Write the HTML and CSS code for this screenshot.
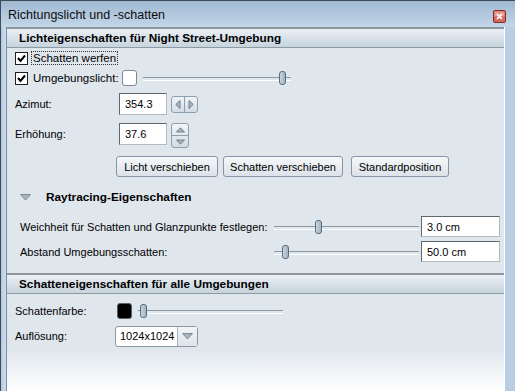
FILE: index.html
```html
<!DOCTYPE html>
<html lang="de">
<head>
    <meta charset="UTF-8">
    <title>Richtungslicht und -schatten</title>
    <link rel="stylesheet" href="styles.css">
</head>
<body>
    <div class="window">
        <div class="titlebar">
            <span class="title">Richtungslicht und -schatten</span>
            <span class="close">
                <svg width="13" height="13" viewBox="0 0 13 13">
                    <rect x="0.5" y="0.5" width="12" height="12" rx="1.5" fill="#d46a5e" stroke="#8a2a22"/>
                    <rect x="1.5" y="1.5" width="10" height="5" fill="#e79a90"/>
                    <path d="M4 4 L9 9 M9 4 L4 9" stroke="#fff" stroke-width="1.6"/>
                </svg>
            </span>
        </div>
        <div class="frame">
            <div class="panel">
                <div class="section-head">Lichteigenschaften für Night Street-Umgebung</div>

                <div class="row row-check">
                    <span class="checkbox"><svg width="11" height="11" viewBox="0 0 11 11"><path d="M2 5 L4.5 8 L9 2.5" fill="none" stroke="#000" stroke-width="2"/></svg></span>
                    <span class="focus">Schatten werfen</span>
                </div>
                <div class="row row-check">
                    <span class="checkbox"><svg width="11" height="11" viewBox="0 0 11 11"><path d="M2 5 L4.5 8 L9 2.5" fill="none" stroke="#000" stroke-width="2"/></svg></span>
                    <span class="check-label">Umgebungslicht:</span>
                    <span class="swatch swatch-white"></span>
                    <span class="slider slider-ambient"><span class="thumb" style="left: 136px"></span></span>
                </div>

                <div class="row row-field row-azimut">
                    <span class="label">Azimut:</span>
                    <span class="input input-num">354.3</span>
                    <span class="spin spin-h">
                        <span class="spin-part"><svg width="6" height="9" viewBox="0 0 6 9"><path d="M5 0.5 L0.8 4.5 L5 8.5 Z" fill="#a9b6c2" stroke="#6e7f8e"/></svg></span>
                        <span class="spin-part"><svg width="6" height="9" viewBox="0 0 6 9"><path d="M1 0.5 L5.2 4.5 L1 8.5 Z" fill="#a9b6c2" stroke="#6e7f8e"/></svg></span>
                    </span>
                </div>
                <div class="row row-field row-hoehe">
                    <span class="label">Erhöhung:</span>
                    <span class="input input-num">37.6</span>
                    <span class="spin spin-v">
                        <span class="spin-part"><svg width="9" height="6" viewBox="0 0 9 6"><path d="M0.5 5 L4.5 0.8 L8.5 5 Z" fill="#a9b6c2" stroke="#6e7f8e"/></svg></span>
                        <span class="spin-part"><svg width="9" height="6" viewBox="0 0 9 6"><path d="M0.5 1 L4.5 5.2 L8.5 1 Z" fill="#a9b6c2" stroke="#6e7f8e"/></svg></span>
                    </span>
                </div>

                <div class="buttons">
                    <span class="btn btn-licht">Licht verschieben</span>
                    <span class="btn btn-schatten">Schatten verschieben</span>
                    <span class="btn btn-standard">Standardposition</span>
                </div>

                <div class="subhead">
                    <svg class="tri" width="11" height="7" viewBox="0 0 11 7"><path d="M0.5 0.5 L10.5 0.5 L5.5 6 Z" fill="#a7b4bf" stroke="#7d8c99"/></svg>
                    <span>Raytracing-Eigenschaften</span>
                </div>

                <div class="row row-ray row-weich">
                    <span class="ray-label">Weichheit für Schatten und Glanzpunkte festlegen:</span>
                    <span class="slider slider-ray"><span class="thumb" style="left: 41px"></span></span>
                    <span class="input input-cm">3.0 cm</span>
                </div>
                <div class="row row-ray row-abstand">
                    <span class="ray-label">Abstand Umgebungsschatten:</span>
                    <span class="slider slider-ray"><span class="thumb" style="left: 8px"></span></span>
                    <span class="input input-cm">50.0 cm</span>
                </div>

                <div class="section-head section-head-2">Schatteneigenschaften für alle Umgebungen</div>

                <div class="row row-color">
                    <span class="label label-narrow">Schattenfarbe:</span>
                    <span class="swatch swatch-black"></span>
                    <span class="slider slider-color"><span class="thumb" style="left: 2px"></span></span>
                </div>
                <div class="row row-select">
                    <span class="label label-select">Auflösung:</span>
                    <span class="select">
                        <span class="select-value">1024x1024</span>
                        <span class="select-arrow"><svg width="11" height="7" viewBox="0 0 11 7"><path d="M0.5 0.5 L10.5 0.5 L5.5 6 Z" fill="#a7b4bf" stroke="#7d8c99"/></svg></span>
                    </span>
                </div>
            </div>
        </div>
    </div>
</body>
</html>
```

FILE: styles.css
```css
*{margin:0;padding:0;box-sizing:border-box;}
body{
    width: 515px;height: 391px;overflow: hidden;
    font-family: "Liberation Sans", Arial, sans-serif;font-size: 11px;color: #000;
    white-space: nowrap;
    background: #fff;
}
.window{
    width: 515px;height: 391px;
    display: flex;flex-direction: column;
    border-top: 1px solid #3e4b58;border-left: 1px solid #3e4b58;
    background: #b8cde3;
}
/* titlebar */
.titlebar{
    height: 26px;flex: none;
    display: flex;align-items: center;justify-content: space-between;
    padding: 0 9px 0 7px;
    background: linear-gradient(#9fb8d0, #c3d6ea);
}
.title{font-size: 12.5px;color: #0c0c0c;padding-top: 2px;}
.close{display: flex;margin-top: 4px;}
.frame{
    flex: 1;display: flex;
    padding: 0 0 0 5px;
    background: linear-gradient(90deg, #b3c8df, #c8d9ea 3px, #b9cde3);
}
.panel{
    width: 499px;
    border-left: 1px solid #7e8e9c;border-right: 1px solid #fff;
    background: linear-gradient(#dfe6ec 0, #dfe6ec 322px, #fff 364px);
    display: flex;flex-direction: column;
}
.section-head{
    height: 21px;flex: none;
    display: flex;align-items: center;
    padding-left: 12px;
    font-weight: bold;font-size: 11.8px;
    border-top: 2px solid #8c969c;border-bottom: 1px solid #8f9ba2;
    background: linear-gradient(#eceff5, #c6d4de);
}
.section-head-2{margin-top: 11px;height: 21px;}
.row{display: flex;align-items: center;padding-left: 8px;}
.row-check{height: 20px;}
.checkbox{
    width: 13px;height: 13px;flex: none;
    border: 1px solid #1f1f1f;background: #fff;
    display: flex;align-items: center;justify-content: center;
    margin-right: 4px;
}
.focus{outline: 1px dotted #333;padding: 0 1px;font-size: 11.5px;}
.check-label{width: 90px;flex: none;padding-left: 1px;font-size: 11.5px;}
.swatch{
    width: 15px;height: 16px;flex: none;
    border: 1px solid #7c8893;border-radius: 3px;
}
.swatch-white{background: #fff;}
.swatch-black{background: #000;border-color: #55606a;}
/* sliders */
.slider{
    position: relative;height: 14px;flex: none;
    display: block;
}
.slider::before{
    content: "";display: block;
    position: absolute;left: 0;right: 0;top: 6px;
    height: 2px;
    border-top: 1px solid #8b99a4;border-bottom: 1px solid #fff;
}
.thumb{
    position: absolute;top: 0;
    width: 7px;height: 14px;
    border: 1px solid #566b7c;border-radius: 3px;
    background: linear-gradient(90deg, #c9d6e0, #9fb2c2);
}
.slider-ambient{width: 148px;margin-left: 6px;}
.slider-ray{width: 145px;}
.slider-color{width: 145px;margin-left: 6px;}
/* fields */
.row-field{height: 22px;}
.row-azimut{margin-top: 5px;}
.row-hoehe{margin-top: 8px;}
.label{width: 104px;flex: none;}
.input{
    height: 22px;background: #fff;flex: none;
    border: 1px solid #b2bac1;border-top-color: #5d6870;border-left-color: #5d6870;
    display: flex;align-items: center;padding-left: 5px;
}
.input-num{width: 48px;}
.spin{
    display: flex;margin-left: 4px;
    border: 1px solid #8d9eac;border-radius: 3px;
    background: linear-gradient(#f3f5f7, #d3dce4);
}
.spin-h{width: 27px;height: 17px;}
.spin-h .spin-part{flex: 1;display: flex;align-items: center;justify-content: center;}
.spin-h .spin-part + .spin-part{border-left: 1px solid #8d9eac;}
.spin-v{flex-direction: column;width: 18px;height: 25px;margin-top: 3px;}
.spin-v .spin-part{flex: 1;display: flex;align-items: center;justify-content: center;}
.spin-v .spin-part + .spin-part{border-top: 1px solid #8d9eac;}
/* buttons */
.buttons{display: flex;gap: 5px;margin: 11px 0 0 109px;height: 21px;}
.btn{
    height: 21px;display: flex;align-items: center;justify-content: center;
    border: 1px solid #8696a4;border-radius: 3px;
    background: linear-gradient(#f6f8fa, #dbe2e9);
}
.btn-licht{width: 102px;}
.btn-schatten{width: 120px;}
.btn-standard{width: 98px;margin-left: 3px;}
/* raytracing */
.subhead{
    display: flex;align-items: center;height: 20px;margin-top: 10px;
    padding-left: 13px;font-weight: bold;font-size: 11.8px;
}
.tri{margin-right: 15px;}
.row-ray{height: 21px;padding-left: 13px;}
.row-weich{margin-top: 9px;}
.row-abstand{margin-top: 4px;}
.ray-label{width: 254px;flex: none;}
.input-cm{width: 79px;height: 21px;margin-left: 2px;}
/* schatten */
.row-color{height: 20px;margin-top: 7px;}
.label-narrow{width: 102px;}
.row-select{height: 20px;margin-top: 5px;}
.label-select{width: 100px;}
.select{
    display: flex;width: 83px;height: 21px;flex: none;
    border: 1px solid #8a98a4;border-radius: 3px;background: #fff;
}
.select-value{flex: 1;display: flex;align-items: center;padding-left: 4px;}
.select-arrow{
    width: 20px;display: flex;align-items: center;justify-content: center;
    border-left: 1px solid #a4b0ba;
    background: linear-gradient(#f3f5f7, #dde4ea);
}
```
